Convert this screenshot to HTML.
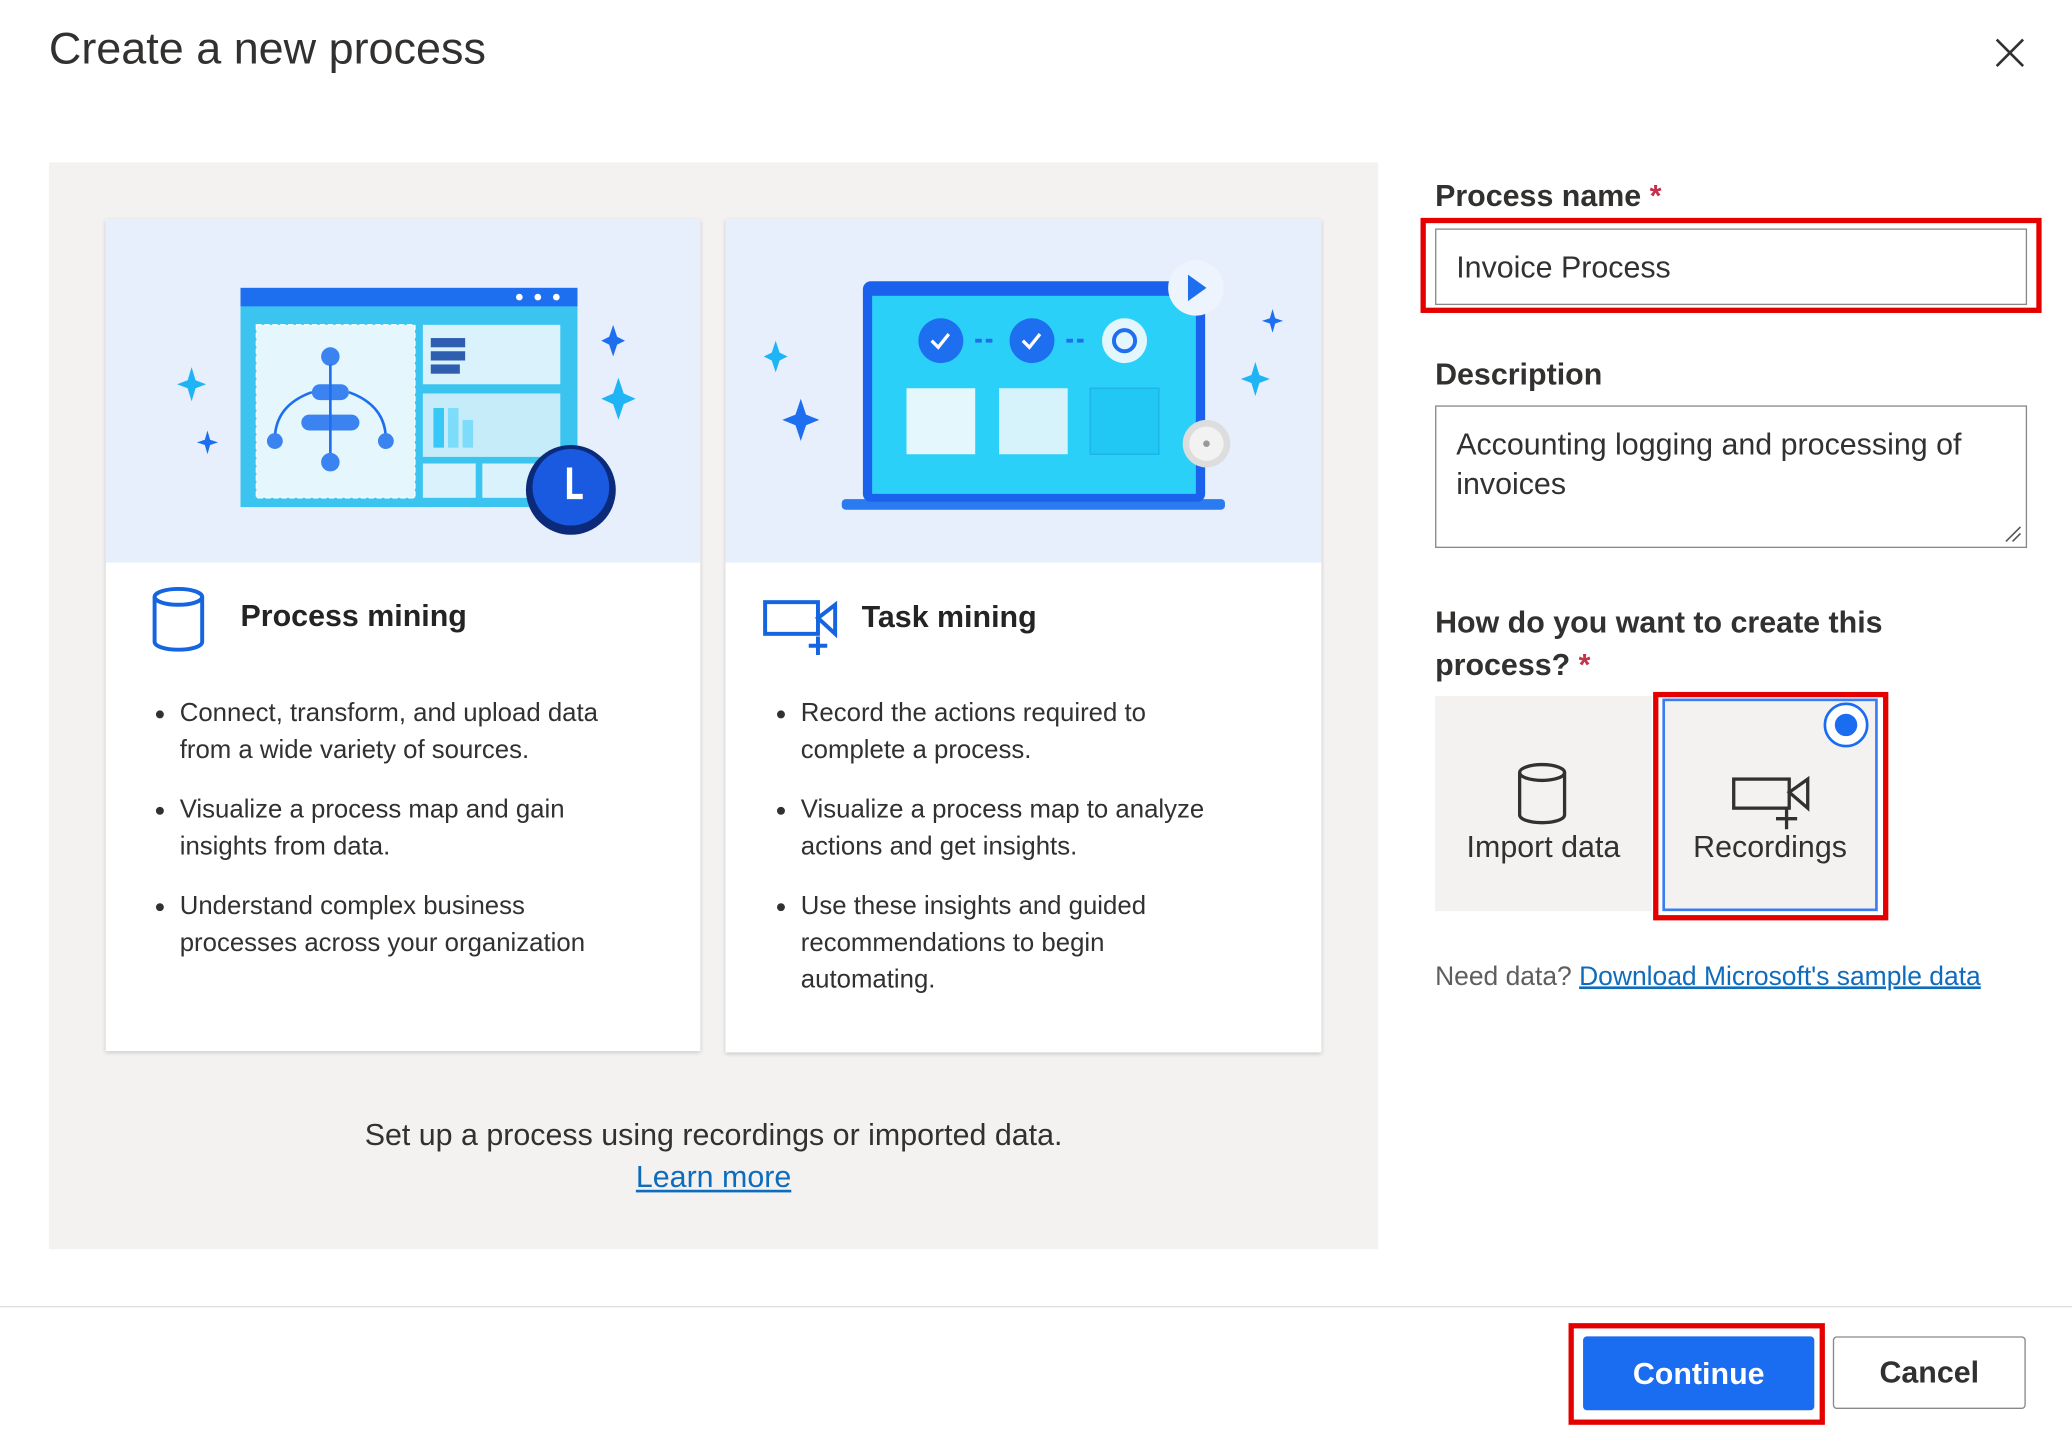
<!DOCTYPE html>
<html><head><meta charset="utf-8"><style>
html,body{margin:0;padding:0;background:#fff;overflow:hidden}
body{width:2072px;height:1446px;position:relative}
#s{position:absolute;left:0;top:0;width:1568px;height:1095px;transform:scale(1.32143,1.3205);transform-origin:0 0;font-family:"Liberation Sans",sans-serif;color:#323130}
.a{position:absolute}
.card{position:absolute;background:#fff;box-shadow:0 1px 3px rgba(0,0,0,.18)}
.img{position:absolute;left:0;top:0;width:100%;height:260px;background:#e7effc}
.ct{position:absolute;font-size:23px;font-weight:bold;color:#242424}
ul{position:absolute;margin:0;padding-left:20px;font-size:19.5px;line-height:28px;color:#323130}
li{margin-bottom:17px}
.lbl{position:absolute;font-size:23px;font-weight:bold;color:#323130}
.red{position:absolute;border:4px solid #e50000;box-sizing:border-box}
a{color:#0f6cbd;text-decoration:underline}
</style></head><body><div id="s">
<div class="a" style="left:37px;top:18px;font-size:34px;color:#323130">Create a new process</div>
<svg class="a" style="left:1510px;top:29px" width="22" height="22" viewBox="0 0 22 22"><path d="M1 1L21 21M21 1L1 21" stroke="#323130" stroke-width="2"/></svg>

<div class="a" style="left:37px;top:123px;width:1006px;height:823px;background:#f3f2f1"></div>

<div class="card" style="left:80px;top:166px;width:450px;height:630px">
<div class="img"><svg width="450" height="260">
<path d="M65 112l3 10 8 3-8 3-3 10-3-10-8-3 8-3z" fill="#1fb4f5"/>
<path d="M77 160l2 7 6 2-6 2-2 7-2-7-6-2 6-2z" fill="#1e6ef0"/>
<path d="M384 80l3 9 6 3-6 3-3 9-3-9-6-3 6-3z" fill="#1e6ef0"/>
<path d="M388 120l4 12 9 4-9 4-4 12-4-12-9-4 9-4z" fill="#1fb4f5"/>
<rect x="102" y="52" width="255" height="166" fill="#3cc4f0"/>
<rect x="102" y="52" width="255" height="14" fill="#1e6ef0"/>
<circle cx="313" cy="59" r="2.5" fill="#fff"/><circle cx="327" cy="59" r="2.5" fill="#fff"/><circle cx="341" cy="59" r="2.5" fill="#fff"/>
<rect x="114" y="80" width="120" height="131" fill="#e5f7fd" stroke="#fff" stroke-dasharray="4 2"/>
<rect x="240" y="80" width="104" height="45" fill="#d9f2fb"/>
<rect x="240" y="132" width="104" height="48" fill="#c6ecfa"/>
<rect x="240" y="185" width="40" height="26" fill="#d9f2fb"/><rect x="285" y="185" width="40" height="26" fill="#d9f2fb"/>
<rect x="246" y="90" width="26" height="7" fill="#2f5db0"/><rect x="246" y="100" width="26" height="7" fill="#2f5db0"/><rect x="246" y="110" width="22" height="7" fill="#2f5db0"/>
<rect x="248" y="143" width="8" height="30" fill="#38c8f8"/><rect x="259" y="143" width="8" height="30" fill="#7edcfb"/><rect x="270" y="152" width="8" height="21" fill="#7edcfb"/>
<circle cx="170" cy="104" r="7" fill="#3a83f0"/><rect x="156" y="125" width="28" height="12" rx="6" fill="#3a83f0"/><rect x="148" y="148" width="44" height="12" rx="6" fill="#3a83f0"/>
<path d="M170 110V180M156 131q-28 10-28 36M184 131q28 10 28 36" stroke="#1e6ef0" stroke-width="2" fill="none"/>
<circle cx="128" cy="168" r="6" fill="#3a83f0"/><circle cx="212" cy="168" r="6" fill="#3a83f0"/><circle cx="170" cy="184" r="7" fill="#3a83f0"/>
<circle cx="352" cy="205" r="34" fill="#0c2a7a"/><circle cx="352" cy="203" r="29" fill="#1a5ae0"/>
<path d="M351 188v22h10" stroke="#fff" stroke-width="4" fill="none"/>
</svg></div>
<svg class="a" style="left:34px;top:278px" width="42" height="50" viewBox="0 0 42 50"><ellipse cx="21" cy="8" rx="18" ry="6" fill="none" stroke="#1565e0" stroke-width="3"/><path d="M3 8v34c0 3.5 8 6 18 6s18-2.5 18-6V8" fill="none" stroke="#1565e0" stroke-width="3"/></svg>
<div class="ct" style="left:102px;top:287px">Process mining</div>
<ul style="left:36px;top:360px;width:345px"><li>Connect, transform, and upload data from a wide variety of sources.</li><li>Visualize a process map and gain insights from data.</li><li>Understand complex business processes across your organization</li></ul>
</div>

<div class="card" style="left:549px;top:166px;width:451px;height:631px">
<div class="img"><svg width="451" height="260">
<path d="M38 92l3 9 6 3-6 3-3 9-3-9-6-3 6-3z" fill="#1fb4f5"/>
<path d="M57 136l4 12 10 4-10 4-4 12-4-12-10-4 10-4z" fill="#1e6ef0"/>
<path d="M414 68l2 7 6 2-6 2-2 7-2-7-6-2 6-2z" fill="#1e6ef0"/>
<path d="M401 108l3 10 8 3-8 3-3 10-3-10-8-3 8-3z" fill="#1fb4f5"/>
<rect x="88" y="212" width="290" height="8" rx="3" fill="#2a7af0"/>
<rect x="104" y="47" width="259" height="167" rx="6" fill="#1a62ee"/>
<rect x="111" y="58" width="245" height="150" fill="#2ad0f8"/>
<circle cx="163" cy="92" r="17" fill="#1e6ef0"/><path d="M156 92l5 5 8-10" stroke="#fff" stroke-width="2.5" fill="none"/>
<circle cx="232" cy="92" r="17" fill="#1e6ef0"/><path d="M225 92l5 5 8-10" stroke="#fff" stroke-width="2.5" fill="none"/>
<circle cx="302" cy="92" r="17" fill="#e4f6fd"/><circle cx="302" cy="92" r="8" fill="none" stroke="#1e6ef0" stroke-width="3"/>
<path d="M189 92h14M258 92h15" stroke="#1e6ef0" stroke-width="3" stroke-dasharray="5 3"/>
<rect x="137" y="128" width="52" height="50" fill="#e4f7fd"/><rect x="207" y="128" width="52" height="50" fill="#d6f3fc"/><rect x="276" y="128" width="52" height="50" fill="#22c8f4" stroke="#1eb2e6"/>
<circle cx="356" cy="52" r="21" fill="#eef4fd"/><path d="M350 42l14 10-14 10z" fill="#1e6ef0"/>
<circle cx="364" cy="170" r="18" fill="#ddd"/><circle cx="364" cy="170" r="13" fill="#f2f2f2"/><circle cx="364" cy="170" r="2.5" fill="#999"/>
</svg></div>
<svg class="a" style="left:28px;top:284px" width="58" height="48" viewBox="0 0 58 48"><rect x="2" y="6" width="40" height="24" fill="none" stroke="#1565e0" stroke-width="3"/><path d="M42 18l13-10v22z" fill="none" stroke="#1565e0" stroke-width="3"/><path d="M42 32v14M35 39h14" stroke="#1565e0" stroke-width="3"/></svg>
<div class="ct" style="left:103px;top:288px">Task mining</div>
<ul style="left:37px;top:360px;width:337px"><li>Record the actions required to complete a process.</li><li>Visualize a process map to analyze actions and get insights.</li><li>Use these insights and guided recommendations to begin automating.</li></ul>
</div>

<div class="a" style="left:37px;width:1006px;top:843px;text-align:center;font-size:23px;line-height:32px;color:#323130">Set up a process using recordings or imported data.<br><a>Learn more</a></div>

<div class="lbl" style="left:1086px;top:135px">Process name <span style="color:#c4314b">*</span></div>
<div class="a" style="left:1086px;top:173px;width:448px;height:58px;border:1px solid #8a8886;box-sizing:border-box;font-size:23px;line-height:56px;padding-left:15px">Invoice Process</div>
<div class="red" style="left:1075px;top:165px;width:470px;height:72px"></div>

<div class="lbl" style="left:1086px;top:270px">Description</div>
<div class="a" style="left:1086px;top:307px;width:448px;height:108px;border:1px solid #8a8886;box-sizing:border-box;font-size:23px;line-height:30px;padding:13px 15px">Accounting logging and processing of invoices</div>
<svg class="a" style="left:1516px;top:397px" width="14" height="14"><path d="M2 13L13 2M7 13L13 7" stroke="#555" stroke-width="1.2"/></svg>

<div class="lbl" style="left:1086px;top:455px;line-height:32px">How do you want to create this<br>process? <span style="color:#c4314b">*</span></div>

<div class="a" style="left:1086px;top:527px;width:164px;height:163px;background:#f3f2f1"></div>
<svg class="a" style="left:1147px;top:577px" width="40" height="48" viewBox="0 0 40 48"><ellipse cx="20" cy="8" rx="17" ry="6" fill="none" stroke="#323130" stroke-width="2.5"/><path d="M3 8v32c0 3.5 7.5 6 17 6s17-2.5 17-6V8" fill="none" stroke="#323130" stroke-width="2.5"/></svg>
<div class="a" style="left:1086px;width:164px;top:628px;text-align:center;font-size:23px">Import data</div>

<div class="a" style="left:1258px;top:529px;width:163px;height:161px;background:#f3f2f1;border:2px solid #3b7cf0;box-sizing:border-box"></div>
<svg class="a" style="left:1310px;top:584px" width="62" height="46" viewBox="0 0 62 46"><rect x="2" y="6" width="42" height="22" fill="none" stroke="#323130" stroke-width="2.5"/><path d="M44 16l14-10v22z" fill="none" stroke="#323130" stroke-width="2.5"/><path d="M42 28v16M34 36h16" stroke="#323130" stroke-width="2.5"/></svg>
<div class="a" style="left:1258px;width:163px;top:628px;text-align:center;font-size:23px">Recordings</div>
<svg class="a" style="left:1379px;top:531px" width="36" height="36"><circle cx="18" cy="18" r="16" fill="#fff" stroke="#1a6cf0" stroke-width="2"/><circle cx="18" cy="18" r="8.5" fill="#1a6cf0"/></svg>
<div class="red" style="left:1251px;top:524px;width:178px;height:173px"></div>

<div class="a" style="left:1086px;top:729px;font-size:20px;color:#605e5c">Need data? <a>Download Microsoft's sample data</a></div>

<div class="a" style="left:0;top:989px;width:1568px;height:1px;background:#e1dfdd"></div>
<div class="a" style="left:1198px;top:1012px;width:175px;height:56px;background:#1a6cf0;border-radius:3px;color:#fff;font-size:23px;font-weight:bold;text-align:center;line-height:56px">Continue</div>
<div class="red" style="left:1187px;top:1002px;width:194px;height:77px"></div>
<div class="a" style="left:1387px;top:1012px;width:146px;height:55px;border:1px solid #8a8886;box-sizing:border-box;border-radius:3px;font-size:23px;font-weight:bold;text-align:center;line-height:53px;color:#323130">Cancel</div>
</div></body></html>
